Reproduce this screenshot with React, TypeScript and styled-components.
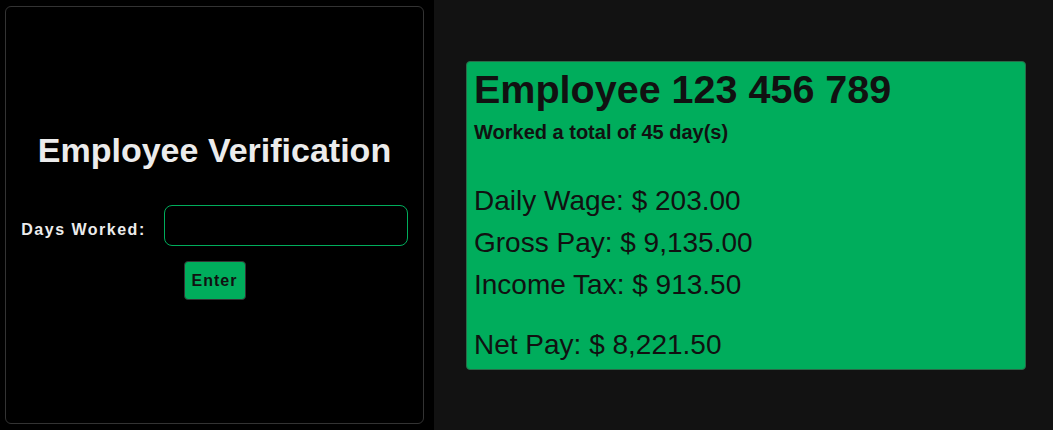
import styled, { createGlobalStyle } from "styled-components";

const GlobalStyle = createGlobalStyle`
  html, body {
    margin: 0;
    padding: 0;
    background: #121212;
    font-family: "Liberation Sans", Arial, sans-serif;
  }
`;

const Page = styled.div`
  display: flex;
  width: 1053px;
  height: 430px;
  background: #121212;
`;

const LeftPanel = styled.div`
  width: 434px;
  height: 430px;
  background: #000;
  box-sizing: border-box;
  padding: 6px 10px 6px 5px;
`;

const VerifyCard = styled.div`
  height: 100%;
  box-sizing: border-box;
  border: 1px solid #333;
  border-radius: 6px;
  display: flex;
  flex-direction: column;
  align-items: center;
  justify-content: center;
  padding-top: 1px;
`;

const Title = styled.h1`
  margin: 0 0 35px;
  font-size: 34px;
  font-weight: bold;
  color: #ececec;
`;

const FieldRow = styled.div`
  display: flex;
  align-items: center;
  gap: 18px;
`;

const Label = styled.label`
  margin-top: 9px;
  font-size: 16px;
  font-weight: bold;
  letter-spacing: 1.5px;
  color: #ececec;
`;

const DaysInput = styled.input`
  width: 244px;
  height: 41px;
  box-sizing: border-box;
  background: #000;
  border: 1px solid #00ad5c;
  border-radius: 8px;
  color: #eee;
  font-size: 16px;
  padding: 0 10px;
  outline: none;
`;

const EnterButton = styled.button`
  margin-top: 15px;
  width: 62px;
  height: 39px;
  background: #00ad5c;
  border: 1px solid #333;
  border-radius: 4px;
  font-family: inherit;
  font-size: 16px;
  font-weight: bold;
  letter-spacing: 1px;
  color: #111;
  cursor: pointer;
`;

const RightPanel = styled.div`
  flex: 1;
  padding: 61px 27px 0 32px;
`;

const ResultCard = styled.div`
  box-sizing: border-box;
  height: 309px;
  background: #00ad5c;
  border: 1px solid #2a6a48;
  border-radius: 4px;
  padding: 5px 7px;
  color: #111;
`;

const EmployeeName = styled.h2`
  margin: 0;
  font-size: 39.5px;
  font-weight: bold;
`;

const DaysNote = styled.div`
  margin-top: 9px;
  font-size: 20px;
  font-weight: bold;
`;

const PayLine = styled.div<{ $gap?: number }>`
  font-size: 28px;
  line-height: 42px;
  margin-top: ${(p) => p.$gap ?? 0}px;
`;

const App = () => {
  return (
    <Page>
      <GlobalStyle />
      <LeftPanel>
        <VerifyCard>
          <Title>Employee Verification</Title>
          <FieldRow>
            <Label htmlFor="days">Days Worked:</Label>
            <DaysInput id="days" type="text" />
          </FieldRow>
          <EnterButton>Enter</EnterButton>
        </VerifyCard>
      </LeftPanel>
      <RightPanel>
        <ResultCard>
          <EmployeeName>Employee 123 456 789</EmployeeName>
          <DaysNote>Worked a total of 45 day(s)</DaysNote>
          <PayLine $gap={36}>Daily Wage: $ 203.00</PayLine>
          <PayLine>Gross Pay: $ 9,135.00</PayLine>
          <PayLine>Income Tax: $ 913.50</PayLine>
          <PayLine $gap={18}>Net Pay: $ 8,221.50</PayLine>
        </ResultCard>
      </RightPanel>
    </Page>
  );
};

export default App;
